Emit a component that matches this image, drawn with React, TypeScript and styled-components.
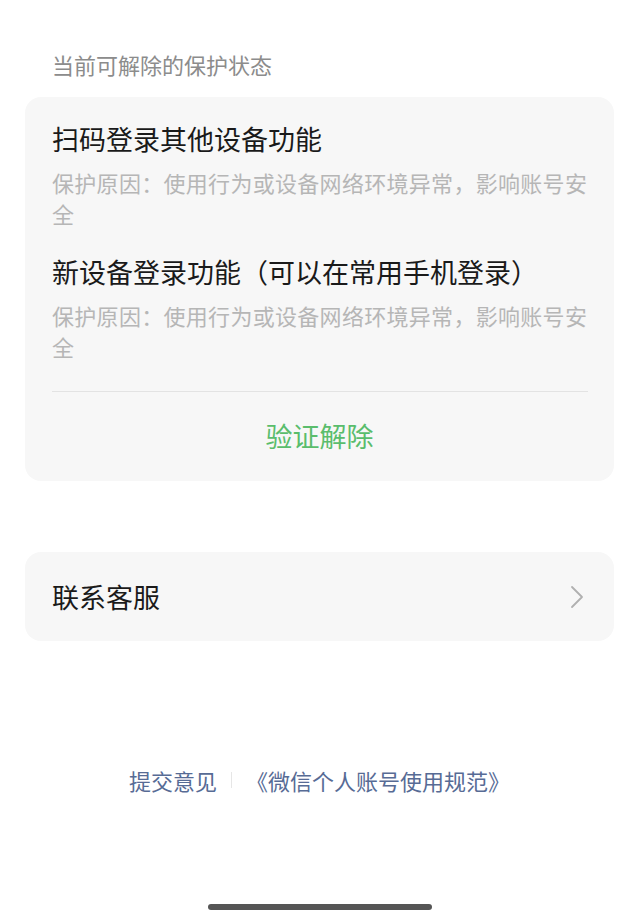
import styled, { createGlobalStyle } from "styled-components";

const GlobalStyle = createGlobalStyle`
  body {
    margin: 0;
    background: #ffffff;
    font-family: "Noto Sans CJK SC", "Noto Sans", sans-serif;
  }
`;

const Page = styled.div`
  width: 640px;
  min-height: 920px;
  display: flex;
  flex-direction: column;
  box-sizing: border-box;
  padding: 49px 26px 0 25px;
`;

const SectionTitle = styled.div`
  font-size: 22px;
  line-height: 30px;
  color: #8c8c8c;
  padding-left: 27px;
  margin-bottom: 18px;
`;

const Card = styled.div`
  background: #f7f7f7;
  border-radius: 16px;
  padding: 24px 24px 0 27px;
`;

const ItemTitle = styled.div<{ $first?: boolean }>`
  font-size: 27px;
  line-height: 36px;
  color: #1a1a1a;
  margin-top: ${(p) => (p.$first ? "0" : "25px")};
`;

const ItemDesc = styled.div`
  font-size: 22px;
  letter-spacing: 0.3px;
  line-height: 31px;
  color: #b6b6b6;
  margin-top: 10px;
`;

const Divider = styled.div`
  height: 1px;
  background: #e3e3e3;
  margin-top: 29px;
  margin-right: 2px;
`;

const ActionButton = styled.div`
  height: 89px;
  padding-bottom: 3px;
  box-sizing: border-box;
  display: flex;
  align-items: center;
  justify-content: center;
  font-size: 27px;
  color: #5abd6c;
  margin-left: -27px;
  margin-right: -24px;
`;

const LinkCard = styled.div`
  margin-top: 71px;
  height: 89px;
  background: #f7f7f7;
  border-radius: 16px;
  display: flex;
  align-items: center;
  justify-content: space-between;
  padding: 0 30px 0 27px;
`;

const LinkText = styled.div`
  font-size: 27px;
  color: #1a1a1a;
`;

const Footer = styled.div`
  margin-top: 124px;
  display: flex;
  align-items: center;
  justify-content: center;
  gap: 14px;
  font-size: 22px;
  line-height: 30px;
  color: #576b95;
`;

const Sep = styled.div`
  width: 1px;
  height: 16px;
  background: #e6e6e6;
`;

const HomeBar = styled.div`
  align-self: center;
  width: 224px;
  height: 6px;
  border-radius: 3px;
  background: #555555;
  margin-top: 109px;
  margin-left: 1px;
`;

const items = [
  "扫码登录其他设备功能",
  "新设备登录功能（可以在常用手机登录）",
];

function Chevron() {
  return (
    <svg width="14" height="24" viewBox="0 0 14 24">
      <polyline
        points="2,2 12,12 2,22"
        fill="none"
        stroke="#b0b0b0"
        strokeWidth="1.8"
        strokeLinecap="round"
        strokeLinejoin="round"
      />
    </svg>
  );
}

export default function App() {
  return (
    <>
      <GlobalStyle />
      <Page>
        <SectionTitle>当前可解除的保护状态</SectionTitle>
        <Card>
          {items.map((title, i) => (
            <div key={title}>
              <ItemTitle $first={i === 0}>{title}</ItemTitle>
              <ItemDesc>保护原因：使用行为或设备网络环境异常，影响账号安全</ItemDesc>
            </div>
          ))}
          <Divider />
          <ActionButton>验证解除</ActionButton>
        </Card>
        <LinkCard>
          <LinkText>联系客服</LinkText>
          <Chevron />
        </LinkCard>
        <Footer>
          <span>提交意见</span>
          <Sep />
          <span>《微信个人账号使用规范》</span>
        </Footer>
        <HomeBar />
      </Page>
    </>
  );
}
